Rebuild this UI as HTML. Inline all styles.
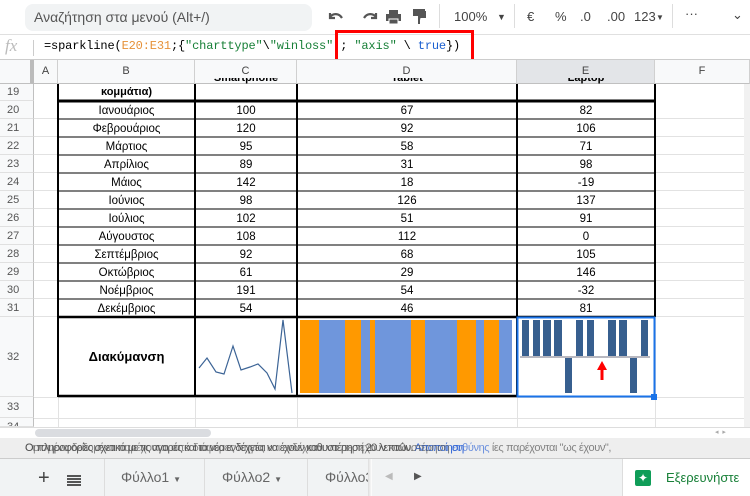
<!DOCTYPE html>
<html><head><meta charset="utf-8"><style>
*{margin:0;padding:0;box-sizing:border-box}
body{width:750px;height:496px;overflow:hidden;background:#fff;font-family:"Liberation Sans",Arial,sans-serif;position:relative;color:#222}
.a{position:absolute}
.t{font-size:11px;color:#000;text-align:center;position:absolute}
.rh{position:absolute;left:0;width:34px;font-size:11px;color:#555;padding-left:7px;background:#f8f9fa;border-right:1px solid #c0c0c0;border-bottom:1px solid #e0e0e0}
.ch{position:absolute;top:60px;height:24px;font-size:11px;color:#444;text-align:center;line-height:23px;background:#f8f9fa;border-right:1px solid #d0d0d0;border-bottom:1px solid #c0c0c0}
.tb{font-size:13px;color:#444;position:absolute;top:9px}
</style></head><body>
<!-- toolbar -->
<div class="a" style="left:25px;top:4px;width:287px;height:27px;background:#f1f3f4;border-radius:8px"></div>
<div class="a" style="left:34px;top:9px;font-size:14px;color:#555">Αναζήτηση στα μενού (Alt+/)</div>
<svg class="a" style="left:326px;top:8px" width="110" height="18" viewBox="0 0 110 18">
<path d="M4 5v5h5M4 9c3-4 9-4 12 1" stroke="#555" stroke-width="2.2" fill="none"/>
<path d="M50 5v5h-5M50 9c-3-4-9-4-12 1" stroke="#555" stroke-width="2.2" fill="none"/>
<rect x="60" y="6" width="15" height="7" fill="#555"/><rect x="63" y="2" width="9" height="4" fill="#555"/><rect x="63" y="11" width="9" height="5" fill="#555" stroke="#fff" stroke-width="1"/>
<path d="M88 2h10v5h-10z M96 4h3v5h-6v7" stroke="#555" stroke-width="2" fill="#555"/>
</svg>
<div class="a" style="left:439px;top:4px;width:1px;height:24px;background:#ddd"></div>
<div class="tb" style="left:454px">100%</div><div class="tb" style="left:497px;font-size:9px;top:12px">▼</div>
<div class="a" style="left:514px;top:4px;width:1px;height:24px;background:#ddd"></div>
<div class="tb" style="left:527px">€</div><div class="tb" style="left:555px">%</div>
<div class="tb" style="left:580px">.0</div><div class="tb" style="left:607px">.00</div>
<div class="tb" style="left:634px">123</div><div class="tb" style="left:656px;font-size:8px;top:13px">▼</div>
<div class="a" style="left:672px;top:4px;width:1px;height:24px;background:#ddd"></div>
<div class="tb" style="left:685px;top:6px">···</div>
<div class="tb" style="left:732px;top:7px">⌄</div>
<!-- formula bar -->
<div class="a" style="left:0;top:34px;width:750px;height:1px;background:#e0e0e0"></div>
<div class="a" style="left:5px;top:36px;font-size:17px;font-style:italic;color:#bbb;font-family:'Liberation Serif',serif">fx</div>
<div class="a" style="left:33px;top:40px;width:1px;height:16px;background:#ccc"></div>
<div class="a" style="left:44px;top:39px;font-family:'Liberation Mono',monospace;font-size:12px;color:#000;letter-spacing:-0.15px">=sparkline(<span style="color:#e69138">E20:E31</span>;{<span style="color:#188038">"charttype"</span>\<span style="color:#188038">"winloss"</span> ; <span style="color:#188038">"axis"</span> \ <span style="color:#1a5fd0">true</span>})</div>
<div class="a" style="left:335px;top:30px;width:139px;height:33px;border:3px solid #f00"></div>
<div class="a" style="left:0;top:59px;width:750px;height:1px;background:#ccc"></div>
<!-- column headers -->
<div class="ch" style="left:0;width:34px;border-right:4px solid #bbb"></div>
<div class="ch" style="left:34px;width:24px">A</div>
<div class="ch" style="left:58px;width:137px">B</div>
<div class="ch" style="left:195px;width:102px">C</div>
<div class="ch" style="left:297px;width:220px">D</div>
<div class="ch" style="left:517px;width:138px;background:#e3e5e8">E</div>
<div class="ch" style="left:655px;width:95px">F</div>
<!-- gridlines -->
<div class="a" style="left:58px;top:84px;width:1px;height:343px;background:#e2e2e2"></div>
<div class="a" style="left:655px;top:84px;width:1px;height:343px;background:#e2e2e2"></div>
<div class="a" style="left:195px;top:397px;width:1px;height:30px;background:#e2e2e2"></div>
<div class="a" style="left:297px;top:397px;width:1px;height:30px;background:#e2e2e2"></div>
<div class="a" style="left:517px;top:397px;width:1px;height:30px;background:#e2e2e2"></div>
<div class="a" style="left:34px;top:418px;width:716px;height:1px;background:#e2e2e2"></div>
<div class="a" style="left:34px;top:397px;width:716px;height:1px;background:#e2e2e2"></div>
<div class="a" style="left:655px;top:101px;width:95px;height:216px;background:repeating-linear-gradient(#fff 0,#fff 17px,#e2e2e2 17px,#e2e2e2 18px)"></div>
<div class="a" style="left:34px;top:101px;width:24px;height:216px;background:repeating-linear-gradient(#fff 0,#fff 17px,#e2e2e2 17px,#e2e2e2 18px)"></div>
<div class="a" style="left:744px;top:84px;width:6px;height:343px;background:#f1f1f1"></div>
<!-- row headers -->
<div class="rh" style="top:84px;height:17px;line-height:17px">19</div>
<div class="rh" style="top:101px;height:18px;line-height:18px">20</div>
<div class="rh" style="top:119px;height:18px;line-height:18px">21</div>
<div class="rh" style="top:137px;height:18px;line-height:18px">22</div>
<div class="rh" style="top:155px;height:18px;line-height:18px">23</div>
<div class="rh" style="top:173px;height:18px;line-height:18px">24</div>
<div class="rh" style="top:191px;height:18px;line-height:18px">25</div>
<div class="rh" style="top:209px;height:18px;line-height:18px">26</div>
<div class="rh" style="top:227px;height:18px;line-height:18px">27</div>
<div class="rh" style="top:245px;height:18px;line-height:18px">28</div>
<div class="rh" style="top:263px;height:18px;line-height:18px">29</div>
<div class="rh" style="top:281px;height:18px;line-height:18px">30</div>
<div class="rh" style="top:299px;height:18px;line-height:18px">31</div>
<div class="rh" style="top:317px;height:80px;line-height:80px">32</div>
<div class="rh" style="top:397px;height:21px;line-height:21px">33</div>
<div class="rh" style="top:418px;height:9px;overflow:hidden;line-height:18px">34</div>
<!-- table -->
<svg class="a" style="left:0;top:0" width="750" height="430">
<g stroke="#000" stroke-width="2">
<line x1="58" y1="84" x2="58" y2="397"/><line x1="195" y1="84" x2="195" y2="397"/>
<line x1="297" y1="84" x2="297" y2="397"/><line x1="517" y1="84" x2="517" y2="397"/>
<line x1="655" y1="84" x2="655" y2="317"/>
<line x1="58" y1="101" x2="655" y2="101" stroke-width="3"/>
<line x1="58" y1="317" x2="655" y2="317" stroke-width="2.5"/>
<line x1="58" y1="396" x2="517" y2="396" stroke-width="2.5"/>
</g>
<g stroke="#000" stroke-width="1">
<line x1="58" y1="119" x2="655" y2="119"/><line x1="58" y1="137" x2="655" y2="137"/>
<line x1="58" y1="155" x2="655" y2="155"/><line x1="58" y1="173" x2="655" y2="173"/>
<line x1="58" y1="191" x2="655" y2="191"/><line x1="58" y1="209" x2="655" y2="209"/>
<line x1="58" y1="227" x2="655" y2="227"/><line x1="58" y1="245" x2="655" y2="245"/>
<line x1="58" y1="263" x2="655" y2="263"/><line x1="58" y1="281" x2="655" y2="281"/>
<line x1="58" y1="299" x2="655" y2="299"/>
</g>
<polyline fill="none" stroke="#3c6496" stroke-width="1.2" points="199,368 207,358 216,372 224,374 233,346 241,370 250,367 258,364 267,373 275,389 283,320 292,393"/>
<rect x="300" y="320" width="212" height="73" fill="#6f96dc"/>
<g fill="#ff9900"><rect x="300" y="320" width="19" height="73"/><rect x="345" y="320" width="16" height="73"/><rect x="370" y="320" width="5" height="73"/><rect x="411" y="320" width="14" height="73"/><rect x="457" y="320" width="19" height="73"/><rect x="484" y="320" width="15" height="73"/></g>
<g fill="#375f8f"><rect x="522" y="320" width="7" height="36"/><rect x="533" y="320" width="7" height="36"/><rect x="543" y="320" width="8" height="36"/><rect x="554" y="320" width="8" height="36"/><rect x="576" y="320" width="7" height="36"/><rect x="587" y="320" width="7" height="36"/><rect x="608" y="320" width="8" height="36"/><rect x="619" y="320" width="8" height="36"/><rect x="641" y="320" width="7" height="36"/>
<rect x="565" y="358" width="7" height="35"/><rect x="630" y="358" width="7" height="35"/></g>
<rect x="520" y="356" width="130" height="2" fill="#b8b8c0"/>
<path d="M602 361l-5 9h3.5v10h3v-10h3.5z" fill="#f00"/>
<rect x="517.5" y="317.5" width="137" height="79" fill="none" stroke="#1a73e8" stroke-width="2"/>
<rect x="651" y="394" width="6" height="6" fill="#1a73e8"/>
</svg>
<!-- cell text -->
<div class="t" style="left:58px;width:137px;top:86px;font-weight:bold">κομμάτια)</div>
<div class="t" style="left:195px;width:102px;top:78px;font-weight:bold;height:7px;overflow:hidden;line-height:1px">Smartphone</div>
<div class="t" style="left:297px;width:220px;top:78px;font-weight:bold;height:7px;overflow:hidden;line-height:1px">Tablet</div>
<div class="t" style="left:517px;width:138px;top:78px;font-weight:bold;height:7px;overflow:hidden;line-height:1px">Laptop</div>
<div class="a" style="left:58px;top:102px;width:597px;font-size:11.5px;line-height:18px;color:#000">
<div style="display:flex"><div style="width:137px;text-align:center">Ιανουάριος</div><div style="width:102px;text-align:center">100</div><div style="width:220px;text-align:center">67</div><div style="width:138px;text-align:center">82</div></div>
<div style="display:flex"><div style="width:137px;text-align:center">Φεβρουάριος</div><div style="width:102px;text-align:center">120</div><div style="width:220px;text-align:center">92</div><div style="width:138px;text-align:center">106</div></div>
<div style="display:flex"><div style="width:137px;text-align:center">Μάρτιος</div><div style="width:102px;text-align:center">95</div><div style="width:220px;text-align:center">58</div><div style="width:138px;text-align:center">71</div></div>
<div style="display:flex"><div style="width:137px;text-align:center">Απρίλιος</div><div style="width:102px;text-align:center">89</div><div style="width:220px;text-align:center">31</div><div style="width:138px;text-align:center">98</div></div>
<div style="display:flex"><div style="width:137px;text-align:center">Μάιος</div><div style="width:102px;text-align:center">142</div><div style="width:220px;text-align:center">18</div><div style="width:138px;text-align:center">-19</div></div>
<div style="display:flex"><div style="width:137px;text-align:center">Ιούνιος</div><div style="width:102px;text-align:center">98</div><div style="width:220px;text-align:center">126</div><div style="width:138px;text-align:center">137</div></div>
<div style="display:flex"><div style="width:137px;text-align:center">Ιούλιος</div><div style="width:102px;text-align:center">102</div><div style="width:220px;text-align:center">51</div><div style="width:138px;text-align:center">91</div></div>
<div style="display:flex"><div style="width:137px;text-align:center">Αύγουστος</div><div style="width:102px;text-align:center">108</div><div style="width:220px;text-align:center">112</div><div style="width:138px;text-align:center">0</div></div>
<div style="display:flex"><div style="width:137px;text-align:center">Σεπτέμβριος</div><div style="width:102px;text-align:center">92</div><div style="width:220px;text-align:center">68</div><div style="width:138px;text-align:center">105</div></div>
<div style="display:flex"><div style="width:137px;text-align:center">Οκτώβριος</div><div style="width:102px;text-align:center">61</div><div style="width:220px;text-align:center">29</div><div style="width:138px;text-align:center">146</div></div>
<div style="display:flex"><div style="width:137px;text-align:center">Νοέμβριος</div><div style="width:102px;text-align:center">191</div><div style="width:220px;text-align:center">54</div><div style="width:138px;text-align:center">-32</div></div>
<div style="display:flex"><div style="width:137px;text-align:center">Δεκέμβριος</div><div style="width:102px;text-align:center">54</div><div style="width:220px;text-align:center">46</div><div style="width:138px;text-align:center">81</div></div>
</div>
<div class="t" style="left:58px;width:137px;top:349px;font-size:13px;font-weight:bold">Διακύμανση</div>
<!-- scrollbar -->
<div class="a" style="left:0;top:427px;width:750px;height:11px;background:#fff;border-top:1px solid #ddd"></div>
<div class="a" style="left:35px;top:429px;width:176px;height:8px;background:#dadce0;border-radius:4px"></div>
<div class="a" style="left:715px;top:428px;font-size:7px;color:#aaa">◂ &nbsp;▸</div>
<!-- footer text -->
<div class="a" style="left:0;top:438px;width:750px;height:21px;background:#eeeeee;border-bottom:1px solid #ccc"></div>
<div class="a" style="left:25px;top:442px;font-size:11px;color:#555;white-space:nowrap;letter-spacing:-0.75px">Οι πληροφορίες σχετικά με τις αγορές και τα νέα ενδέχεται να έχουν καθυστέρηση 20 λεπτών. <span style="color:#3367d6">Αποποίηση</span></div>
<div class="a" style="left:25px;top:442px;font-size:11px;color:#555;white-space:nowrap;letter-spacing:-0.4px;opacity:.7">Ορισμένα δεδομένα παρέχονται από διάφορες πηγές και ενδέχεται να περιέχουν καθυστέρηση <span style="color:#3367d6">ευθύνης</span> ίες παρέχονται "ως έχουν",</div>
<!-- tab bar -->
<div class="a" style="left:0;top:459px;width:750px;height:37px;background:#f1f3f4"></div>
<div class="a" style="left:38px;top:467px;font-size:20px;color:#444">+</div>
<div class="a" style="left:67px;top:475px;width:14px;height:11px;background:repeating-linear-gradient(#555 0,#555 2px,transparent 2px,transparent 3px)"></div>
<div class="a" style="left:104px;top:459px;width:1px;height:37px;background:#ddd"></div>
<div class="a" style="left:121px;top:469px;font-size:14px;color:#666">Φύλλο1 <span style="font-size:8px">▼</span></div>
<div class="a" style="left:204px;top:459px;width:1px;height:37px;background:#ddd"></div>
<div class="a" style="left:222px;top:469px;font-size:14px;color:#666">Φύλλο2 <span style="font-size:8px">▼</span></div>
<div class="a" style="left:307px;top:459px;width:1px;height:37px;background:#ddd"></div>
<div class="a" style="left:325px;top:469px;font-size:14px;color:#666;width:43px;overflow:hidden;white-space:nowrap">Φύλλο3</div>
<div class="a" style="left:368px;top:459px;width:4px;height:37px;background:linear-gradient(90deg,#ddd,#fff)"></div>
<div class="a" style="left:372px;top:459px;width:250px;height:37px;background:#f1f3f4"></div>
<div class="a" style="left:385px;top:471px;font-size:10px;color:#bbb">◀</div>
<div class="a" style="left:414px;top:471px;font-size:10px;color:#555">▶</div>
<div class="a" style="left:622px;top:459px;width:128px;height:37px;background:#fff;border-left:1px solid #ddd"></div>
<div class="a" style="left:635px;top:470px;width:16px;height:16px;background:#0f9d58;border-radius:2px;color:#fff;font-size:12px;text-align:center;line-height:16px">✦</div>
<div class="a" style="left:666px;top:470px;font-size:13px;color:#188038">Εξερευνήστε</div>
</body></html>
